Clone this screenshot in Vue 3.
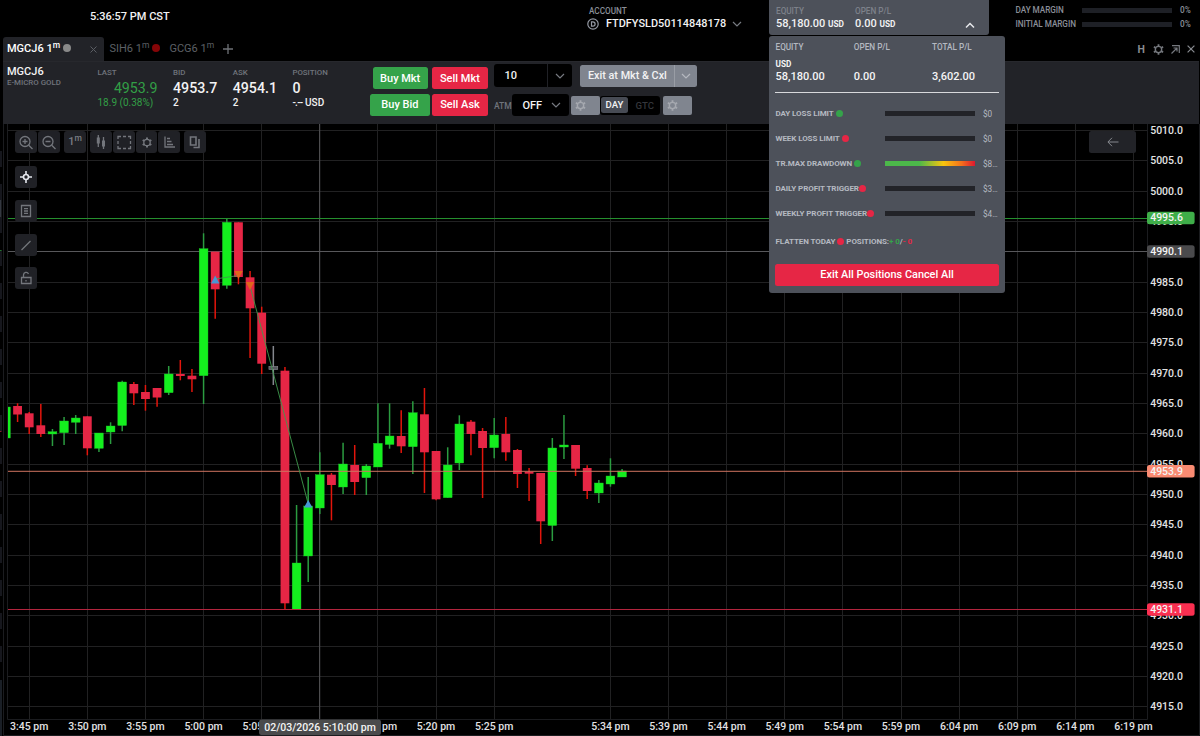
<script setup>
const step = 11.625
const cx = (n) => 29.2 + n * step
// index, high, body top, body bottom, low, kind
const candles = [
  [-2, 407, 407, 438, 438, 'g'], [-1, 403.3, 406, 414.5, 422, 'r'], [0, 412, 413.3, 427.3, 434, 'r'],
  [1, 404, 425.3, 434, 437, 'r'], [2, 429, 431.7, 434, 446, 'g'], [3, 417, 421, 432.7, 445, 'g'],
  [4, 415, 418, 422.3, 434, 'g'], [5, 416.3, 416.3, 448.3, 455.3, 'r'], [6, 433, 433, 448.3, 452, 'g'],
  [7, 422.3, 426, 432, 444, 'g'], [8, 380.7, 382, 425.5, 431.3, 'g'], [9, 382, 384, 393.3, 405, 'r'],
  [10, 385, 392, 399, 410.7, 'r'], [11, 388, 388, 397.5, 406.7, 'r'], [12, 366, 374, 392.7, 395, 'g'],
  [13, 360, 374, 376, 380.3, 'r'], [14, 369, 375.7, 379.3, 392, 'r'], [15, 233.3, 248.7, 375.7, 404, 'g'],
  [16, 251.7, 251.7, 289.3, 318.7, 'r'], [17, 218, 222.3, 285.3, 288.7, 'g'], [18, 222.3, 222.3, 277, 284.3, 'r'],
  [19, 271, 277.3, 308.3, 358, 'r'], [20, 306.7, 312.7, 363.7, 374, 'r'], [21, 346, 366.5, 369.5, 385, 'n'],
  [22, 367, 370.7, 603.3, 609.7, 'r'], [23, 505, 563, 609.5, 609.5, 'g'], [24, 477, 506, 556, 582, 'g'],
  [25, 452.3, 474.7, 508, 514, 'g'], [26, 473, 474.7, 485, 520.3, 'r'], [27, 442.7, 464, 487, 494, 'g'],
  [28, 445, 465, 482, 495, 'r'], [29, 464, 466, 477.7, 495, 'g'], [30, 403.3, 443.3, 467, 467, 'g'],
  [31, 403.3, 436, 444.5, 448.7, 'g'], [32, 410.3, 436, 446.3, 453, 'r'], [33, 401.3, 412.7, 446.7, 474, 'g'],
  [34, 388, 414.3, 452.3, 493, 'r'], [35, 451, 451, 499.3, 500.3, 'r'], [36, 447.3, 465, 497.7, 497.7, 'g'],
  [37, 415.3, 424, 463, 470, 'g'], [38, 420, 421.7, 434, 455.3, 'r'], [39, 428, 431, 448, 498, 'r'],
  [40, 418, 435, 447.7, 458.3, 'g'], [41, 417, 434, 452.3, 460.7, 'r'], [42, 449, 450, 474, 488, 'r'],
  [43, 468, 471.7, 473.7, 501, 'r'], [44, 473, 473, 521.3, 544, 'r'], [45, 438, 448, 525.5, 541, 'g'],
  [46, 415, 445, 447, 459, 'g'], [47, 445, 445, 468.7, 476, 'r'], [48, 465.3, 468, 491, 499, 'r'],
  [49, 480, 483, 493, 503, 'g'], [50, 458.3, 476, 484, 486.7, 'g'], [51, 469, 471, 477, 477, 'g'],
].map(([n, high, top, bottom, low, kind]) => ({ x: cx(n), high, top, bottom, low, kind }))

const prices = Array.from({ length: 20 }, (_, i) => ({ label: (5010 - i * 5).toFixed(1), y: 130.9 + i * 30.33 }))
const times = ['3:45', '3:50', '3:55', '5:00', '5:05', '', '5:15', '5:20', '5:25', null, '5:34', '5:39', '5:44', '5:49', '5:54', '5:59', '6:04', '6:09', '6:14', '6:19']
  .map((t, i) => ({ t, x: 29.2 + i * 58.12 }))
  .filter((g) => g.t !== null)

const tags = [
  { label: '4995.6', y: 218, color: '#3fae49' },
  { label: '4990.1', y: 251.5, color: '#4a4a4c' },
  { label: '4953.9', y: 471.3, color: '#fa8b72' },
  { label: '4931.1', y: 609.5, color: '#fa2f50' },
]

const limits = [
  { label: 'DAY LOSS LIMIT', on: true, value: '$0' },
  { label: 'WEEK LOSS LIMIT', on: false, value: '$0' },
  { label: 'TR.MAX DRAWDOWN', on: true, value: '$8…', heat: true },
  { label: 'DAILY PROFIT TRIGGER', on: false, value: '$3…', tight: true },
  { label: 'WEEKLY PROFIT TRIGGER', on: false, value: '$4…', tight: true },
]
// cells of the neighbouring window that peek in at the left edge
const side = Array.from({ length: 16 }, (_, i) => 151 + i * 33)
</script>

<template>
  <div class="app">
    <header class="topbar">
      <div class="clock">5:36:57 PM CST</div>
      <div class="account">
        <div class="lbl">ACCOUNT</div>
        <div class="acct-row">
          <svg width="12" height="12" viewBox="0 0 12 12" fill="none" stroke="#959aa5"><circle cx="6" cy="6" r="5.200" stroke-width="1.200" /><path d="M4.500 3.800h1.400a2.200 2.200 0 0 1 0 4.400H4.500z" stroke-width="1.200" /></svg>
          <span>FTDFYSLD50114848178</span>
          <svg width="10" height="6" viewBox="0 0 10 6" fill="none" stroke="#777b82" stroke-width="1.200"><path d="M1 1l4 4 4-4" /></svg>
        </div>
      </div>
      <div class="equity">
        <div class="eq-col"><div class="lbl">EQUITY</div><div class="eq-val">58,180.00 <small>USD</small></div></div>
        <div class="eq-col"><div class="lbl">OPEN P/L</div><div class="eq-val">0.00 <small>USD</small></div></div>
        <svg class="up" width="10" height="7" viewBox="0 0 10 7" fill="none" stroke="#e8e9ec" stroke-width="1.500"><path d="M1 5.500l4-4 4 4" /></svg>
      </div>
      <div class="margins">
        <div class="mrow"><span>DAY MARGIN</span><i></i><b>0%</b></div>
        <div class="mrow"><span>INITIAL MARGIN</span><i></i><b>0%</b></div>
      </div>
    </header>

    <nav class="tabs">
      <div class="tab active"><span>MGCJ6 1<sup>m</sup></span><i class="dot gray"></i>
        <svg class="x" width="7" height="7" viewBox="0 0 7 7" stroke="#5b5e64"><path d="M.5.5l6 6M6.500.5l-6 6" /></svg></div>
      <div class="tab second"><span>SIH6 1<sup>m</sup></span><i class="dot dark"></i></div>
      <div class="tab third"><span>GCG6 1<sup>m</sup></span></div>
      <svg class="plus" width="10" height="10" viewBox="0 0 10 10" stroke="#6f7277" stroke-width="1.300"><path d="M5 0v10M0 5h10" /></svg>
      <div class="win">
        <b>H</b>
        <svg width="11" height="11" viewBox="0 0 16 16" fill="none" stroke="#75787e" stroke-width="2"><circle cx="8" cy="8" r="4.600" /><path stroke-width="2.600" d="M8 .3v3M8 12.700v3M1.300 4.100L4 5.700M12 10.300l2.700 1.600M1.300 11.900L4 10.300M12 5.700l2.700-1.600" /></svg>
        <svg width="9" height="9" viewBox="0 0 9 9" fill="none" stroke="#75787e" stroke-width="1.200"><path d="M.5 8.500L6 3M2.500 3H6v3.500M1 .7h7.300V8" /></svg>
        <svg width="8" height="8" viewBox="0 0 8 8" stroke="#888b90" stroke-width="1.200"><path d="M.6.6l6.800 6.800M7.400.6L.6 7.400" /></svg>
      </div>
    </nav>

    <section class="panel">
      <div class="sym"><strong>MGCJ6</strong><span>E-MICRO GOLD</span></div>
      <div class="q last"><span>LAST</span><strong>4953.9</strong><em>18.9 (0.38%)</em></div>
      <div class="q bid"><span>BID</span><strong>4953.7</strong><em>2</em></div>
      <div class="q ask"><span>ASK</span><strong>4954.1</strong><em>2</em></div>
      <div class="q pos"><span>POSITION</span><strong>0</strong><em><i class="dash">-.--</i> USD</em></div>
      <div class="sides">
        <div class="pair"><button class="buy mkt">Buy Mkt</button><button class="sell">Sell Mkt</button></div>
        <div class="pair"><button class="buy bidb">Buy Bid</button><button class="sell">Sell Ask</button></div>
      </div>
      <div class="order">
        <div class="orow">
          <div class="qty"><span>10</span><i><svg width="10" height="6" viewBox="0 0 10 6" fill="none" stroke="#777a81" stroke-width="1.200"><path d="M1 1l4 4 4-4" /></svg></i></div>
          <div class="exit"><span>Exit at Mkt &amp; Cxl</span><i><svg width="10" height="6" viewBox="0 0 10 6" fill="none" stroke="#b5b8bf" stroke-width="1.200"><path d="M1 1l4 4 4-4" /></svg></i></div>
        </div>
        <div class="orow two">
          <label>ATM</label>
          <div class="off"><span>OFF</span><svg width="10" height="6" viewBox="0 0 10 6" fill="none" stroke="#777a81" stroke-width="1.200"><path d="M1 1l4 4 4-4" /></svg></div>
          <div class="gearbtn"><svg width="11" height="11" viewBox="0 0 16 16" fill="none" stroke="#a6a9b0" stroke-width="2"><circle cx="8" cy="8" r="4.600" /><path stroke-width="2.600" d="M8 .3v3M8 12.700v3M1.300 4.100L4 5.700M12 10.300l2.700 1.600M1.300 11.900L4 10.300M12 5.700l2.700-1.600" /></svg></div>
          <div class="tif"><b>DAY</b><span>GTC</span></div>
          <div class="gearbtn g2"><svg width="11" height="11" viewBox="0 0 16 16" fill="none" stroke="#a6a9b0" stroke-width="2"><circle cx="8" cy="8" r="4.600" /><path stroke-width="2.600" d="M8 .3v3M8 12.700v3M1.300 4.100L4 5.700M12 10.300l2.700 1.600M1.300 11.900L4 10.300M12 5.700l2.700-1.600" /></svg></div>
        </div>
      </div>
    </section>

    <main class="chart">
      <svg class="plot" width="1200" height="612" viewBox="0 124 1200 612">
        <defs><clipPath id="plotClip"><rect x="8" y="124" width="1139" height="595" /></clipPath></defs>
        <g class="grid">
          <path v-for="p in prices" :key="p.label" :d="`M8 ${Math.round(p.y) - 0.5}H1147`" />
          <path v-for="t in times" :key="t.x" :d="`M${Math.floor(t.x) + 0.5} 124V719`" />
        </g>
        <path class="frame" d="M7.500 124V719.500H1147.500V124M3.500 124V735.500H1199.500V124" />
        <path class="cross" d="M8 251.500H1147" />
        <path class="cross" d="M319.700 124V719" />
        <g clip-path="url(#plotClip)">
          <g v-for="c in candles" :key="c.x" :class="c.kind">
            <path class="wick" :d="`M${c.x} ${c.high}V${c.low}`" />
            <rect :x="c.x - 4.400" :y="c.top" width="8.800" :height="c.bottom - c.top" />
          </g>
        </g>
        <path d="M8 218.500H1147" stroke="#258f2e" />
        <path d="M8 471.300H1147" stroke="#cf735f" />
        <path d="M8 609.500H1147" stroke="#b3253e" />
        <path class="trade" d="M215.200 279L238.500 275.500M250 286L308 503" />
        <path d="M215.200 275.500l4.200 8h-8.400zM308.200 500l4.200 7.500h-8.400z" fill="#4796d3" />
        <path d="M238.500 279l4.200-8h-8.400zM250 290l4.200-8h-8.400z" fill="#e1651c" />
        <g class="axis">
          <text v-for="p in prices" :key="p.label" x="1150.200" :y="p.y + 3.200">{{ p.label }}</text>
          <text v-for="t in times.filter((g) => g.t)" :key="t.x" :x="t.x" y="730.200" text-anchor="middle">{{ t.t }} pm</text>
        </g>
        <g v-for="t in tags" :key="t.label">
          <rect x="1147" :y="t.y - 6.200" width="47.600" height="12.400" rx="2.500" :fill="t.color" />
          <text class="tag" x="1150.200" :y="t.y + 3.300">{{ t.label }}</text>
        </g>
        <rect x="259" y="719.500" width="122" height="15.500" rx="2.500" fill="#4a4a4c" />
        <text class="tag" x="320" y="731" text-anchor="middle">02/03/2026 5:10:00 pm</text>
        <rect v-for="s in side" :key="s" x="0" :y="s" width="2" height="16" fill="#16171d" />
        <rect x="0" y="200" width="1.500" height="17" fill="#343840" />
        <path d="M0 250.500h1.500" stroke="#1f7a2c" />
        <path d="M0 431.500h1.500" stroke="#8c2034" />
        <rect x="0" y="680" width="2" height="56" fill="#1a1f26" />
      </svg>

      <div class="tools">
        <div class="grp">
          <span><svg viewBox="0 0 22 22"><circle cx="10" cy="10.500" r="5" /><path d="M13.700 14.200L17.500 18M7.500 10.500h5M10 8v5" /></svg></span>
          <span><svg viewBox="0 0 22 22"><circle cx="10" cy="10.500" r="5" /><path d="M13.700 14.200L17.500 18M7.500 10.500h5" /></svg></span>
        </div>
        <div class="grp"><span class="min">1<sup>m</sup></span></div>
        <div class="grp four">
          <span><svg viewBox="0 0 22 22"><path d="M8.300 4v12M13.500 6v12" /><path stroke-width="3" d="M8.300 6.500v6M13.500 9.500v6" /></svg></span>
          <span><svg viewBox="0 0 22 22"><path d="M5 8V5.500h3M10 5.500h3M15 5.500h2.500V8M17.500 10v3M17.500 15v2.500H15M13 17.500h-3M8 17.500H5V15M5 13v-3" /></svg></span>
          <span><svg viewBox="0 0 22 22"><circle cx="11" cy="11.500" r="3.200" /><path stroke-width="2" d="M11 6.500v2M11 14.500v2M6.700 9l1.700 1M13.600 13l1.700 1M6.700 14l1.700-1M13.600 10l1.700-1" /></svg></span>
          <span><svg viewBox="0 0 22 22"><path d="M7 5.500v10.500h10M9 7.500h3M9 10.500h4.500M9 13.500h6" /></svg></span>
        </div>
        <div class="grp"><span><svg viewBox="0 0 22 22"><path d="M6.500 6h5.500v8H6.500zM15 8v8.500H9.500" stroke-width="1.600" /></svg></span></div>
      </div>
      <div class="rail">
        <span><svg viewBox="0 0 22 22" class="bright"><circle cx="11" cy="11" r="2.500" /><path d="M11 5v3.500M11 13.500V17M5 11h3.500M13.500 11H17" /></svg></span>
        <span><svg viewBox="0 0 22 22"><path d="M6.500 5.500h9v11h-9zM9 8.700h4M9 11h4M9 13.300h4" /></svg></span>
        <span><svg viewBox="0 0 22 22"><path d="M6.500 16L15.500 7" /></svg></span>
        <span><svg viewBox="0 0 22 22"><path d="M6.500 10.500h9.500v6H6.500zM8.500 10.500V8a2.600 2.600 0 0 1 5-1M11 13v1.500" /></svg></span>
      </div>
      <div class="back"><svg width="12" height="10" viewBox="0 0 12 10" fill="none" stroke="#85888e"><path d="M11.500 5H1M5 .8L.9 5 5 9.200" /></svg></div>
    </main>

    <aside class="drop">
      <div class="cols">
        <div><span class="h">EQUITY</span><b class="cur">USD</b><b>58,180.00</b></div>
        <div><span class="h">OPEN P/L</span><b class="cur">&nbsp;</b><b>0.00</b></div>
        <div><span class="h">TOTAL P/L</span><b class="cur">&nbsp;</b><b>3,602.00</b></div>
      </div>
      <div class="limits">
        <div v-for="l in limits" :key="l.label" class="limit">
          <div class="name" :class="{ tight: l.tight }">{{ l.label }}<i class="led" :class="{ on: l.on }"></i></div>
          <div class="bar" :class="{ heat: l.heat }"></div>
          <span class="amt">{{ l.value }}</span>
        </div>
      </div>
      <div class="flat">FLATTEN TODAY<i class="led"></i>POSITIONS:<em class="pg">+ 0</em>/<em class="pr">- 0</em></div>
      <button class="exitall">Exit All Positions Cancel All</button>
    </aside>
  </div>
</template>

<style>
html, body { margin: 0; background: #000; overflow: hidden; }
</style>
<style scoped>
.app, .app * { box-sizing: border-box; }
.app { position: relative; width: 1200px; height: 736px; background: #000; color: #f2f2f3; font-family: Roboto, "Liberation Sans", sans-serif; font-weight: 500; overflow: hidden; display: flex; flex-direction: column; }
svg { display: block; flex: none; }
i, em { font-style: normal; }
button { border: 0; padding: 0; font: inherit; color: #fff; }
.topbar { height: 37px; display: flex; flex: none; white-space: nowrap; }
.clock { width: 588px; padding: 10px 0 0 90px; font-size: 11px; line-height: 13px; }
.lbl { font-size: 8.200px; line-height: 10px; color: #8a8f98; }
.account { width: 181px; padding-top: 6px; }
.account .lbl { padding-left: 1px; }
.acct-row { display: flex; align-items: center; font-size: 10.900px; line-height: 14px; padding-top: 1px; }
.acct-row svg:first-child { margin-left: -1px; }
.acct-row span { margin: 0 6px 0 7px; }
.equity { width: 220px; height: 34.500px; background: #4d515a; border-radius: 0 0 3px 3px; display: flex; padding: 6px 0 0 7px; }
.equity .lbl { color: #7d818a; }
.eq-col { width: 79px; }
.eq-val { font-size: 11px; line-height: 14px; padding-top: 1px; }
.eq-val small { font-size: 8.300px; font-weight: 700; }
.up { margin: 16px 0 0 31px; }
.margins { padding: 3px 0 0 26.500px; }
.mrow { display: flex; align-items: center; height: 14px; font-size: 8.200px; color: #8a8f98; }
.mrow span { width: 66.500px; letter-spacing: -.05px; }
.mrow i { width: 90px; height: 5px; background: #1e2026; }
.mrow b { font-weight: 500; margin-left: 8px; }
.tabs { height: 24px; flex: none; display: flex; padding-left: 3px; font-size: 11px; white-space: nowrap; }
.tab { display: flex; align-items: center; color: #5d6066; font-weight: 400; height: 24px; }
.tab sup { font-size: 8.500px; line-height: 0; vertical-align: 4px; }
.tab span { line-height: 14px; padding-bottom: 1px; }
.tab.active { width: 101px; background: #222328; border-radius: 3px 3px 0 0; padding-left: 4px; color: #fff; font-weight: 500; }
.dot { width: 8px; height: 8px; border-radius: 50%; margin: -2px 0 0 3px; }
.gray { background: #898989; }
.dark { background: #850507; }
.x { margin: 0 7px 0 auto; }
.second { margin-left: 5.500px; }
.third { margin-left: 9px; }
.plus { margin: 7px 0 0 9px; }
.win { margin-left: auto; display: flex; align-items: center; padding-right: 5px; color: #888b90; }
.win b { font-size: 10.500px; font-weight: 700; margin-right: 8px; }
.win svg + svg { margin-left: 7px; }
.panel { height: 63px; flex: none; margin: 0 1px 0 3px; background: #222328; border-top: 1px solid #27282d; display: flex; white-space: nowrap; }
.sym { width: 94.500px; padding: 3px 0 0 4px; display: flex; flex-direction: column; }
.sym strong { font-size: 11px; line-height: 13px; font-weight: 500; }
.sym span { font-size: 7.900px; line-height: 10px; color: #70747c; letter-spacing: -.02px; }
.q { display: flex; flex-direction: column; padding-top: 6px; }
.q span { font-size: 7.900px; line-height: 10px; color: #70747c; }
.q strong { font-size: 14.200px; line-height: 20px; font-weight: 500; }
.q em { font-size: 10px; line-height: 10px; }
.last { width: 75.500px; }
.last strong { width: 60px; text-align: right; color: #329f46; font-weight: 400; }
.last em { color: #329f46; font-weight: 400; }
.bid, .ask { width: 59.700px; }
.pos { width: 77.600px; }
.dash { letter-spacing: -.7px; }
.sides { width: 124px; padding-top: 5px; display: flex; flex-direction: column; gap: 4.500px; }
.pair { display: flex; gap: 4.500px; justify-content: flex-end; padding-right: 6.300px; }
.buy, .sell { height: 22.300px; border-radius: 2.500px; font-size: 11px; font-weight: 500; }
.buy { background: #35a34a; }
.sell { background: #e62645; width: 55.500px; }
.mkt { width: 55px; }
.bidb { width: 60px; margin-right: -2px; }
.order { padding-top: 2px; }
.orow { display: flex; align-items: center; height: 23px; }
.two { margin-top: 6.500px; }
.qty { width: 78px; height: 22.500px; background: #000; border-radius: 3px; display: flex; align-items: center; font-size: 11px; }
.qty span { width: 53px; padding-left: 10.500px; }
.qty i { flex: 1; height: 100%; border-left: 1px solid #202126; display: flex; align-items: center; justify-content: center; }
.exit { width: 117.500px; height: 22px; margin-left: 8px; background: #80858f; border-radius: 2.500px; display: flex; align-items: center; font-size: 10.800px; }
.exit span { width: 94.500px; padding-left: 8px; }
.exit i { flex: 1; height: 100%; border-left: 1px solid #999da5; display: flex; align-items: center; justify-content: center; }
.two label { width: 18px; font-size: 8.500px; color: #70747c; padding-top: 1px; }
.off { width: 57px; height: 22.500px; background: #000; border-radius: 3px; display: flex; align-items: center; font-size: 11px; padding-left: 10.500px; gap: 9px; }
.gearbtn { width: 29px; height: 19px; margin-left: 2px; background: #80858f; border-radius: 2px; display: flex; align-items: center; padding-left: 4px; }
.tif { width: 60.500px; height: 19px; background: #000; border-radius: 3px; display: flex; align-items: center; font-size: 9.600px; padding-left: 1px; }
.tif b { width: 27px; height: 16px; line-height: 16px; text-align: center; background: #474b54; border-radius: 2.500px; font-weight: 500; }
.tif span { color: #34363b; margin-left: 7.500px; }
.g2 { margin-left: 3px; }
.chart { position: relative; flex: 1; }
.grid path { stroke: #212122; }
.frame { fill: none; stroke: #1b1c1f; }
.cross { stroke: #58585b; }
.axis text, .tag { font: 500 10.500px Roboto, "Liberation Sans", sans-serif; fill: #e2e2e3; }
.tag { fill: #f4f4f4; }
.g rect { fill: #14ef1e; stroke: #1fc32c; stroke-width: .4; }
.g .wick { stroke: #2b9c40; stroke-width: 1.500; }
.r rect { fill: #e62645; }
.r .wick { stroke: #e3150c; stroke-width: 1.500; }
.n rect { fill: #55585e; stroke: #8b8e94; stroke-width: .6; }
.n .wick { stroke: #84878d; stroke-width: 1.500; }
.trade { fill: none; stroke: #3f9a4d; stroke-width: .9; }
.tools { position: absolute; left: 15px; top: 7px; display: flex; gap: 4px; }
.grp { display: flex; gap: 1px; }
.tools span, .rail span { width: 22px; height: 22px; background: #202126; border-radius: 3px; display: block; overflow: hidden; }
.tools .four span { width: 21.750px; }
.tools svg, .rail svg { width: 22px; height: 22px; fill: none; stroke: #73767c; stroke-width: 1.300; }
.rail svg.bright { stroke: #e4e7ed; stroke-width: 1.600; }
.tools .min { font-size: 11px; line-height: 22px; text-align: center; color: #7a7d83; }
.min sup { font-size: 8.500px; line-height: 0; vertical-align: 4px; }
.rail { position: absolute; left: 15px; top: 42px; display: flex; flex-direction: column; gap: 11.800px; }
.back { position: absolute; left: 1089px; top: 7px; width: 47px; height: 22px; background: #222328; border-radius: 2.500px; display: flex; align-items: center; justify-content: center; }
.drop { position: absolute; left: 769px; top: 36px; width: 236px; height: 256.500px; background: #4d515a; border-radius: 3px; padding: 0 6px; font-size: 8.200px; color: #b5b9c1; white-space: nowrap; display: flex; flex-direction: column; }
.cols { display: flex; height: 57px; border-bottom: 1px solid #d8d9dc; padding: 6px 0 0 .5px; }
.cols div { flex: none; width: 78.300px; display: flex; flex-direction: column; }
.h { line-height: 10px; }
.cols b { color: #f5f5f6; font-size: 11px; line-height: 14px; font-weight: 500; }
.cols .cur { font-size: 8.200px; line-height: 10px; margin: 7px 0 1px; font-weight: 700; }
.limits { padding-top: 8px; }
.limit { display: flex; align-items: center; height: 25.100px; padding-left: .5px; }
.name { width: 109px; display: flex; align-items: center; font-weight: 700; font-size: 8px; letter-spacing: -.08px; }
.led { flex: none; width: 7px; height: 7px; border-radius: 50%; background: #e62645; margin-left: 2px; }
.tight .led { margin-left: 0; }
.led.on { background: #35a34a; }
.bar { width: 90px; height: 5px; background: #222328; }
.bar.heat { background: linear-gradient(90deg, #4cb84a 0%, #4cb84a 38%, #f9c50e 65%, #f5701c 85%, #dd1730 100%); }
.amt { margin-left: 8.500px; font-weight: 400; }
.flat { display: flex; align-items: center; height: 12px; margin-top: 9px; padding-left: .5px; font-weight: 700; font-size: 8px; letter-spacing: -.08px; }
.flat .led { margin: 0 2px; }
.pg { color: #35a34a; }
.pr { color: #e62645; }
.exitall { height: 22px; margin-top: 16.500px; background: #e62645; border-radius: 2.500px; font-size: 10.900px; font-weight: 500; padding-bottom: 1px; }
</style>
